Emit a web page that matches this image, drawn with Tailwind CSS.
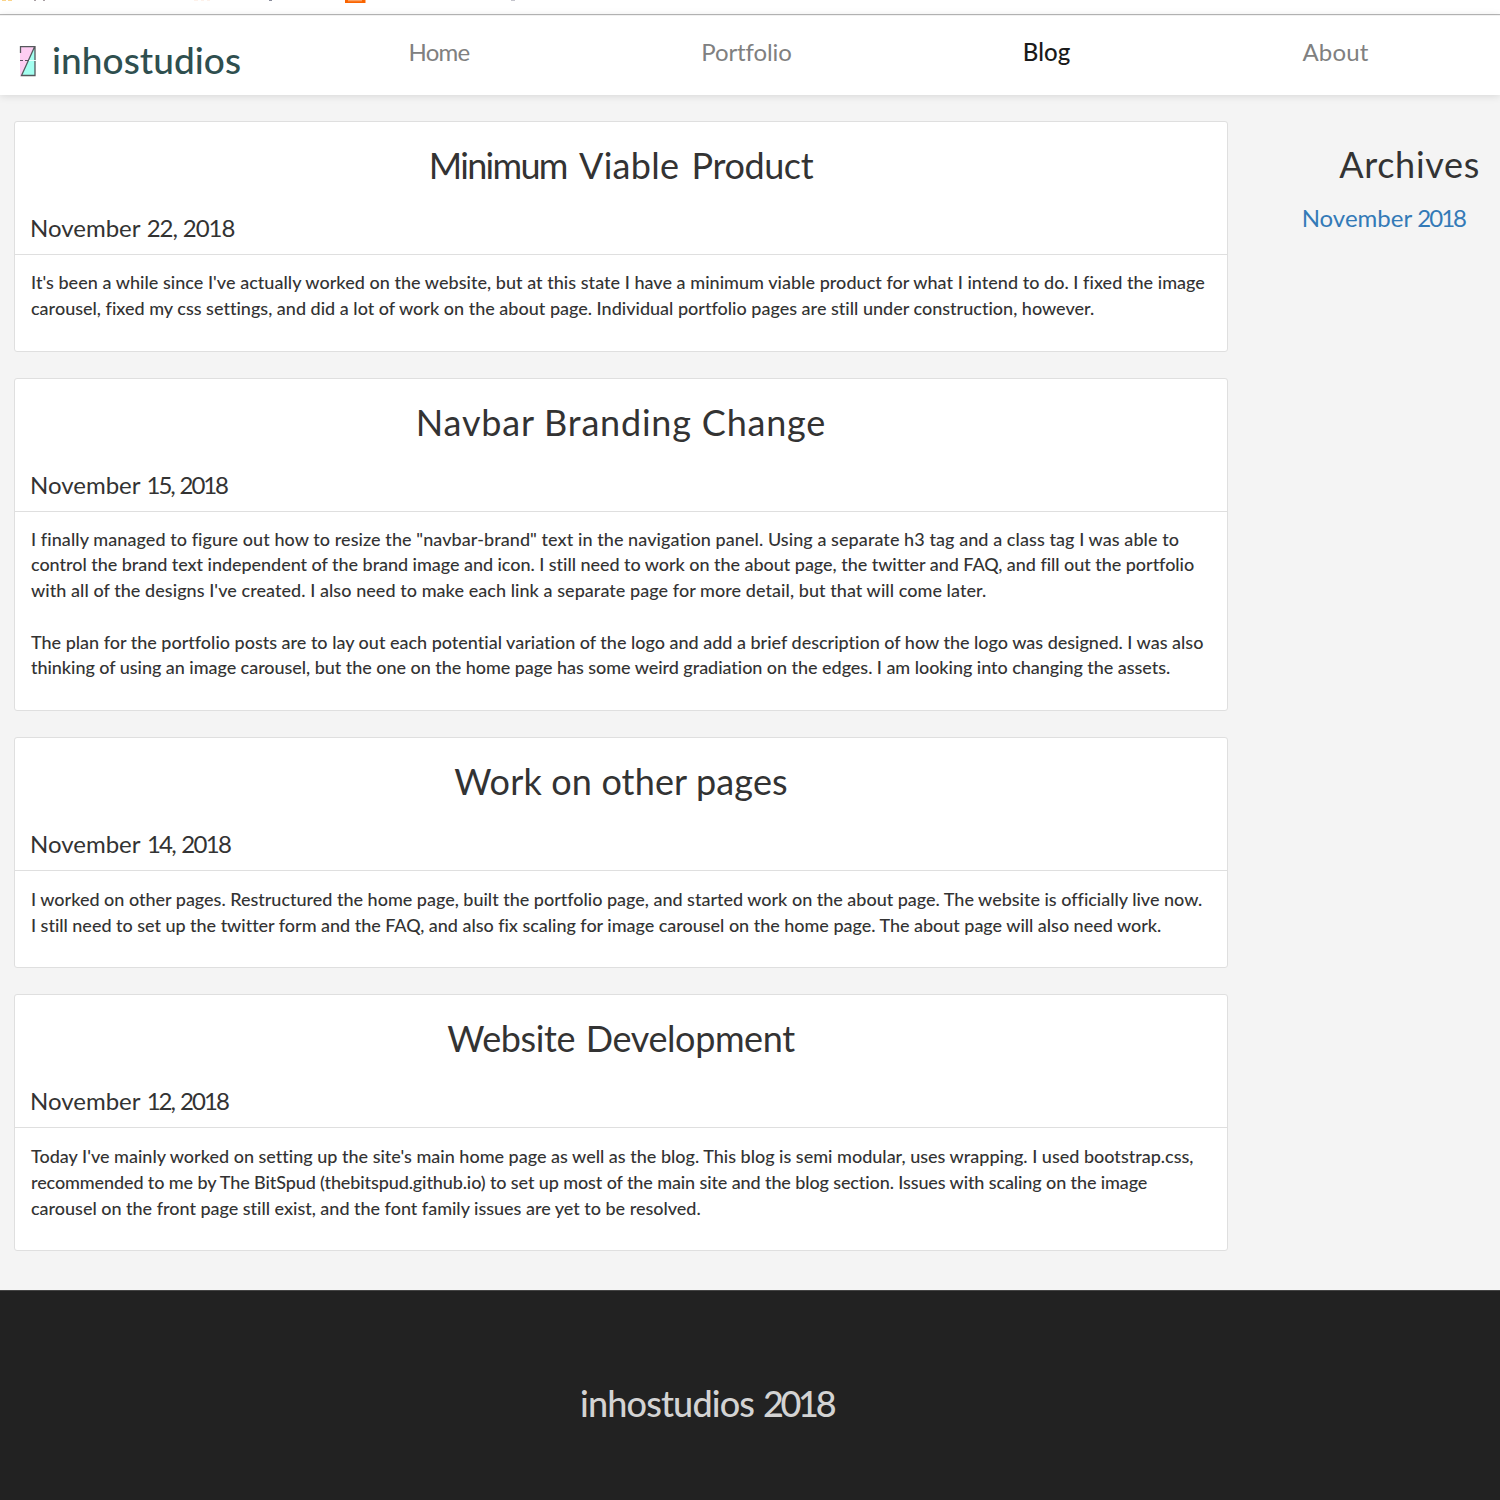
<!DOCTYPE html>
<html lang="en">
<head>
<meta charset="utf-8">
<title>inhostudios - Blog</title>
<script src="https://cdn.jsdelivr.net/npm/@tailwindcss/browser@4"></script>
</head>
<body class="h-[1500px] overflow-hidden bg-[#f4f4f4] font-[Lato,sans-serif] text-[#333] flex flex-col">

<!-- Bottom edge of the browser's bookmarks bar -->
<div class="relative h-[15px] shrink-0 border-b border-[#b9b9b9] bg-white">
  <svg class="block" width="540" height="4" viewBox="0 0 540 4">
    <path d="M2 0h4v1h-4zM8 0h4v1h-4z" fill="#fbd489"/>
    <path d="M34 0h2v1h-2zM43 0h2v1h-2z" fill="#a9a0a4"/>
    <path d="M194 0h4v1h-4zM201 0h3v1h-3zM207 0h3v1h-3z" fill="#fdf1ea"/>
    <path d="M269 0h3v1h-3z" fill="#8a8d9c"/>
    <path d="M345 0h20.500v3h-20.500z" fill="#fa6400"/>
    <path d="M348 0h14v1.300h-14z" fill="#fba163"/>
    <path d="M511 0h4v1h-4z" fill="#c4c4cc"/>
  </svg>
</div>

<nav class="relative flex h-[80px] shrink-0 items-start border-t border-[#f1f1f1] bg-white shadow-[0_1px_8px_rgba(0,0,0,0.12)] text-2xl leading-8 text-[#808080]">
  <a class="flex w-[292px] pl-[19px] pt-[20px]">
    <svg class="mt-[9px]" width="18" height="34" viewBox="0 0 18 34">
      <path d="M1 1h15L2 31H1z" fill="#fdcdf2"/>
      <path d="M16 1v30H2z" fill="#a3fff0"/>
      <path d="M1.500 8V1.700H16V30.500H2.500L15.500 2" fill="none" stroke="#55585c" stroke-width="1.300"/>
      <path d="M1 15.500h3M6 15.500h4" stroke="#5a5060" stroke-width="1"/>
      <path d="M10 15.500h7" stroke="#e8fffb" stroke-width="1"/>
    </svg>
    <span class="ml-[15px] text-[37px] leading-[48px] font-medium tracking-[0.050px] text-[#2f4f4f]">inhostudios</span>
  </a>
  <div class="flex grow pt-[20px] whitespace-nowrap">
    <a class="w-[294px] text-center tracking-[-0.700px]">Home</a>
    <a class="w-[321px] text-center tracking-[-0.100px]">Portfolio</a>
    <a class="w-[279px] text-center tracking-[0.100px] font-medium text-[#1a1a1a]">Blog</a>
    <a class="w-[299px] text-center tracking-[0.200px]">About</a>
  </div>
</nav>

<main class="flex h-[1195px] shrink-0 pl-[14px] pt-[26px]">
  <div class="flex w-[1214px] flex-col gap-[26.100px] [&_p]:whitespace-nowrap">
    <article class="h-[230.700px] rounded-[3px] border border-[#dfdfdf] bg-white">
      <header class="h-[133px] border-b border-[#dfdfdf] pl-[15px] pr-[15px] pt-[19px]">
        <h1 class="text-center text-4xl leading-[48px] [word-spacing:3px]"><span class="tracking-[-1.700px]">Minimum</span> <span class="tracking-[0.300px]">Viable</span> <span class="tracking-[-0.400px]">Product</span></h1>
        <h2 class="mt-[23px] text-2xl leading-8">November<span class="tracking-[-1.050px] [word-spacing:1px]"> 22, 2018</span></h2>
      </header>
      <div class="pl-4 pt-[15px] text-lg leading-[25.700px] font-medium">
        <p class="tracking-[0.037px]">It's been a while since I've actually worked on the website, but at this state I have a minimum viable product for what I intend to do. I fixed the image</p>
        <p class="tracking-[0.007px]">carousel, fixed my css settings, and did a lot of work on the about page. Individual portfolio pages are still under construction, however.</p>
      </div>
    </article>

    <article class="h-[333.500px] rounded-[3px] border border-[#dfdfdf] bg-white">
      <header class="h-[133px] border-b border-[#dfdfdf] pl-[15px] pr-[15px] pt-[19px]">
        <h1 class="text-center text-4xl leading-[48px] tracking-[0.800px]">Navbar Branding Change</h1>
        <h2 class="mt-[23px] text-2xl leading-8">November<span class="tracking-[-2.100px] [word-spacing:2px]"> 15, 2018</span></h2>
      </header>
      <div class="pl-4 pt-[15px] text-lg leading-[25.700px] font-medium">
        <p class="tracking-[0.075px]">I finally managed to figure out how to resize the "navbar-brand" text in the navigation panel. Using a separate h3 tag and a class tag I was able to</p>
        <p class="tracking-[-0.039px]">control the brand text independent of the brand image and icon. I still need to work on the about page, the twitter and FAQ, and fill out the portfolio</p>
        <p class="tracking-[0.058px]">with all of the designs I've created. I also need to make each link a separate page for more detail, but that will come later.</p>
        <p class="mt-[25.700px] tracking-[-0.005px]">The plan for the portfolio posts are to lay out each potential variation of the logo and add a brief description of how the logo was designed. I was also</p>
        <p class="tracking-[-0.042px]">thinking of using an image carousel, but the one on the home page has some weird gradiation on the edges. I am looking into changing the assets.</p>
      </div>
    </article>

    <article class="h-[230.700px] rounded-[3px] border border-[#dfdfdf] bg-white">
      <header class="h-[133px] border-b border-[#dfdfdf] pl-[15px] pr-[15px] pt-[19px]">
        <h1 class="text-center text-4xl leading-[48px] tracking-[0.150px]">Work on other pages</h1>
        <h2 class="mt-[23px] text-2xl leading-8">November<span class="tracking-[-1.750px] [word-spacing:2px]"> 14, 2018</span></h2>
      </header>
      <div class="pl-4 pt-[16px] text-lg leading-[25.700px] font-medium">
        <p class="tracking-[-0.011px]">I worked on other pages. Restructured the home page, built the portfolio page, and started work on the about page. The website is officially live now.</p>
        <p class="tracking-[-0.025px]">I still need to set up the twitter form and the FAQ, and also fix scaling for image carousel on the home page. The about page will also need work.</p>
      </div>
    </article>

    <article class="h-[256.400px] rounded-[3px] border border-[#dfdfdf] bg-white">
      <header class="h-[133px] border-b border-[#dfdfdf] pl-[15px] pr-[15px] pt-[19px]">
        <h1 class="text-center text-4xl leading-[48px] tracking-[-0.400px] [word-spacing:2px]">Website Development</h1>
        <h2 class="mt-[23px] text-2xl leading-8">November<span class="tracking-[-2px] [word-spacing:2px]"> 12, 2018</span></h2>
      </header>
      <div class="pl-4 pt-[16px] text-lg leading-[25.700px] font-medium">
        <p class="tracking-[0.003px]">Today I've mainly worked on setting up the site's main home page as well as the blog. This blog is semi modular, uses wrapping. I used bootstrap.css,</p>
        <p class="tracking-[-0.107px]">recommended to me by The BitSpud (thebitspud.github.io) to set up most of the main site and the blog section. Issues with scaling on the image</p>
        <p class="tracking-[-0.014px]">carousel on the front page still exist, and the font family issues are yet to be resolved.</p>
      </div>
    </article>
  </div>

  <aside class="flex grow flex-col items-end pt-[19px] whitespace-nowrap">
    <h1 class="mr-[20px] text-4xl leading-[48px] tracking-[0.700px]">Archives</h1>
    <a class="mt-[14px] mr-[35px] text-2xl leading-8 text-[#337ab7]">November<span class="tracking-[-2px] [word-spacing:1px]"> 2018</span></a>
  </aside>
</main>

<footer class="h-[210px] shrink-0 border-t border-[#444] bg-[#222] pl-[580px] pt-[88px]">
  <p class="text-4xl leading-[48px] font-medium tracking-[-0.850px] text-[#d3d3d3]">inhostudios<span class="tracking-[-3.300px] [word-spacing:3px]"> 2018</span></p>
</footer>
</body>
</html>
